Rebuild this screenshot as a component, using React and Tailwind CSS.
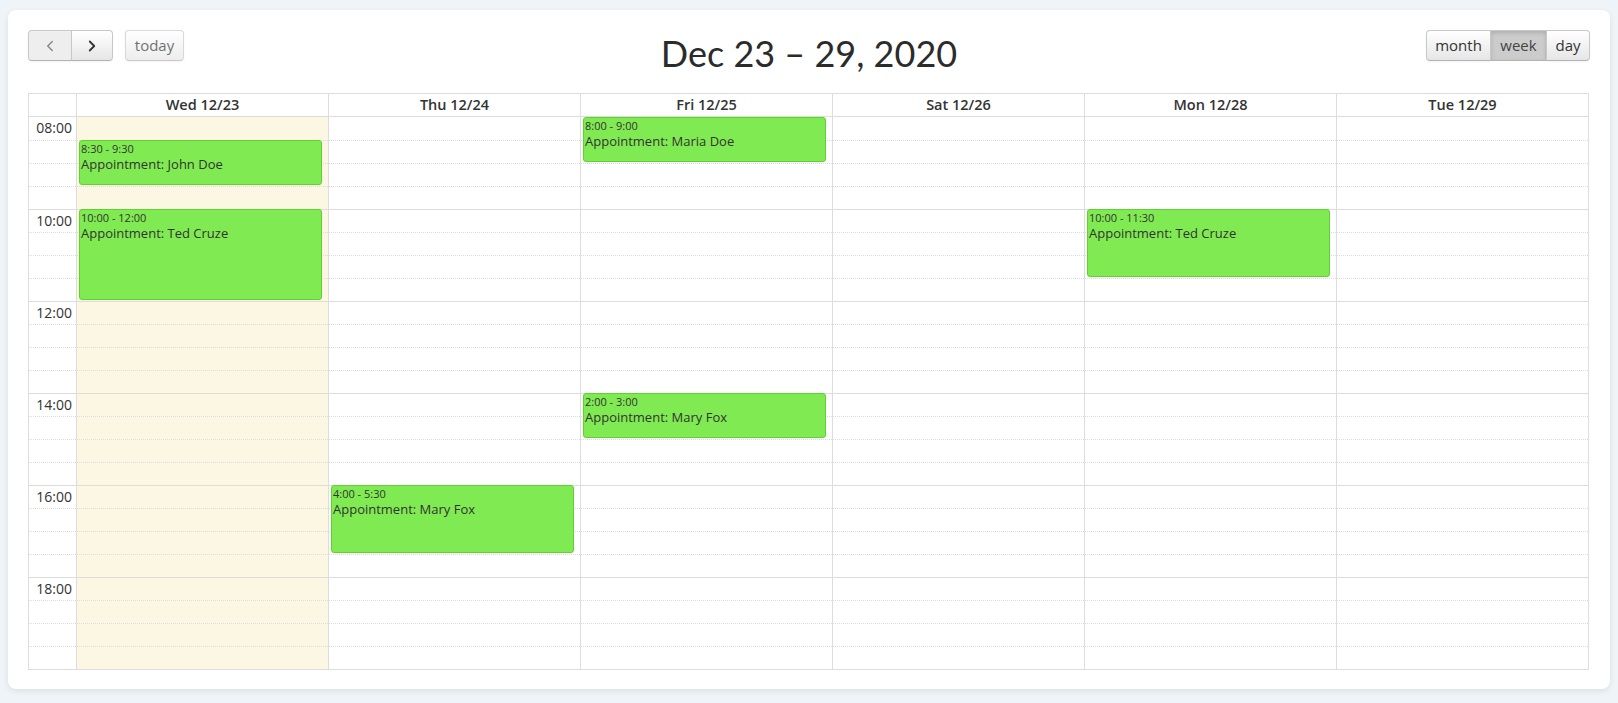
import React from "react";
import { ChevronLeft, ChevronRight } from "lucide-react";

const days = [
  { label: "Wed 12/23", today: true },
  { label: "Thu 12/24" },
  { label: "Fri 12/25" },
  { label: "Sat 12/26" },
  { label: "Mon 12/28" },
  { label: "Tue 12/29" },
];

// slot = 30 minutes starting at 08:00
const events = [
  { day: 0, start: 1, slots: 2, time: "8:30 - 9:30", title: "Appointment: John Doe" },
  { day: 0, start: 4, slots: 4, time: "10:00 - 12:00", title: "Appointment: Ted Cruze" },
  { day: 1, start: 16, slots: 3, time: "4:00 - 5:30", title: "Appointment: Mary Fox" },
  { day: 2, start: 0, slots: 2, time: "8:00 - 9:00", title: "Appointment: Maria Doe" },
  { day: 2, start: 12, slots: 2, time: "2:00 - 3:00", title: "Appointment: Mary Fox" },
  { day: 4, start: 4, slots: 3, time: "10:00 - 11:30", title: "Appointment: Ted Cruze" },
];

const SLOT = 23;
const slots = Array.from({ length: 24 }, (_, i) => i);

function rowBorder(i) {
  if (i === 0) return "";
  return i % 4 === 0 ? "border-t border-solid border-[#ddd]" : "border-t border-dotted border-[#ddd]";
}

const btn =
  "h-[31px] px-[10px] text-[15px] text-[#333] border border-[#c8c8c8] border-b-[#b3b3b3] bg-gradient-to-b from-white to-[#e6e6e6] shadow-[inset_0_1px_0_rgba(255,255,255,0.2),0_1px_2px_rgba(0,0,0,0.05)] flex items-center justify-center";

export default function App() {
  return (
    <div
      className="min-h-screen bg-[#eff4f9] pt-[10px] px-[8px]"
      style={{ fontFamily: "'Open Sans', 'Liberation Sans', sans-serif" }}
    >
      <div className="w-[1602px] h-[679px] bg-white rounded-[8px] shadow-[0_2px_6px_rgba(0,0,0,0.09)] px-[20px] pt-[20px]">
        {/* toolbar */}
        <div className="grid grid-cols-[1fr_auto_1fr] h-[63px] items-start">
          <div className="flex items-start gap-[12px]">
            <div className="flex">
              <button className={btn + " w-[44px] rounded-l-[4px] !bg-none !bg-[#eeeeee]"}>
                <ChevronLeft className="w-[18px] h-[18px] text-[#888]" strokeWidth={2} />
              </button>
              <button className={btn + " w-[42px] -ml-px rounded-r-[4px]"}>
                <ChevronRight className="w-[18px] h-[18px] text-[#333]" strokeWidth={2.4} />
              </button>
            </div>
            <button className={btn + " rounded-[4px] opacity-70 w-[59px]"}>today</button>
          </div>
          <h1
            className="text-[36px] leading-[44px] text-[#2b2b2b] pt-[1px]"
            style={{ fontFamily: "Lato, 'Liberation Sans', sans-serif" }}
          >
            Dec 23 – 29, 2020
          </h1>
          <div className="flex justify-end">
            <button className={btn + " rounded-l-[4px] w-[65px]"}>month</button>
            <button className={btn + " -ml-px w-[57px] !bg-none !bg-[#cccccc] shadow-[inset_0_2px_4px_rgba(0,0,0,0.15)] text-[#444]"}>
              week
            </button>
            <button className={btn + " -ml-px rounded-r-[4px] w-[44px]"}>day</button>
          </div>
        </div>

        {/* calendar */}
        <div className="border border-[#ddd] w-[1561px] text-[#333]">
          <div className="flex h-[23px] border-b border-[#ddd]">
            <div className="w-[47px]" />
            {days.map((d) => (
              <div
                key={d.label}
                className="flex-1 border-l border-[#ddd] text-center text-[14.5px] font-semibold leading-[22px]"
              >
                {d.label}
              </div>
            ))}
          </div>
          <div className="flex">
            <div className="w-[47px]">
              {slots.map((i) => (
                <div key={i} className={"h-[23px] text-right pr-[4px] text-[14px] leading-[22px] " + rowBorder(i)}>
                  {i % 4 === 0 ? `${String(8 + i / 2).padStart(2, "0")}:00` : ""}
                </div>
              ))}
            </div>
            {days.map((d, di) => (
              <div
                key={d.label}
                className={"flex-1 relative border-l border-[#ddd] " + (d.today ? "bg-[#fcf7e3]" : "")}
              >
                {slots.map((i) => (
                  <div key={i} className={"h-[23px] " + rowBorder(i)} />
                ))}
                {events
                  .filter((e) => e.day === di)
                  .map((e) => (
                    <div
                      key={e.title + e.start}
                      className="absolute left-[2px] right-[2.3%] bg-[#80ea52] border border-[#5ed330] rounded-[3px] px-px text-[#333] overflow-hidden"
                      style={{ top: e.start * SLOT, height: e.slots * SLOT - 1 }}
                    >
                      <div className="text-[11px] leading-[14px] mt-[1px]">{e.time}</div>
                      <div className="text-[13px] leading-[17px]">{e.title}</div>
                    </div>
                  ))}
              </div>
            ))}
          </div>
        </div>
      </div>
    </div>
  );
}
